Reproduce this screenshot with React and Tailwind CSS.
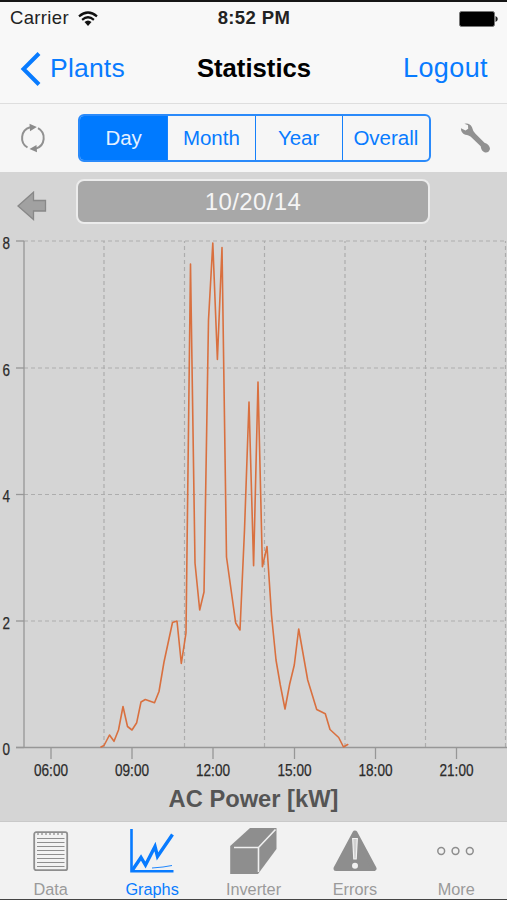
import React from "react";

const gridY = [241, 368, 494.5, 621];
const gridX = [104, 184.5, 264.5, 345, 425.5, 505.5];
const yTicks = [[8, 241], [6, 368], [4, 494.5], [2, 621], [0, 747.5]];
const xTicks = [["06:00", 51], ["09:00", 132], ["12:00", 213], ["15:00", 294.5], ["18:00", 375.5], ["21:00", 456.5]];
const power =
  "101,747 104,745.5 109.5,735 114,741.3 118.5,730 123,706.5 127.5,726.5 132,730 136.7,722.7 141,702 145.3,699.5 154.5,702.8 159,691.5 164,662 172.5,622.5 177,621 181.3,663.5 186,633 190.5,264 195,563 199.7,610 204,592 208.5,320 212.8,243 217.4,359.5 222,247.5 226.5,557 235.7,623 240,630 244.5,530 249,402 253.6,565.7 258,382 262.4,566.7 267,546.5 271.5,615 276,660 280.3,685 285,709 289.7,684 294.3,665 298.7,629 307.7,680 316.7,709.5 325.3,713.7 330,729.5 338.7,737.5 343.5,747 347.7,744.5";

function Chart() {
  return (
    <svg className="block h-[553px] w-full" viewBox="0 232 507 553" fontFamily="'Liberation Sans', Arial, sans-serif">
      <g stroke="#adadad" strokeWidth="1.2" strokeDasharray="4 3">
        {gridY.map((y) => <line key={y} x1="24" x2="507" y1={y} y2={y} />)}
        {gridX.map((x) => <line key={x} x1={x} x2={x} y1="747" y2="241" />)}
      </g>
      <g stroke="#979797" strokeWidth="1.3">
        <line x1="24" x2="24" y1="241" y2="747.5" />
        <line x1="16" x2="507" y1="747.5" y2="747.5" />
        {yTicks.map(([v, y]) => <line key={v} x1="16" x2="24" y1={y} y2={y} />)}
        {xTicks.map(([v, x]) => <line key={v} x1={x} x2={x} y1="747.5" y2="759" />)}
      </g>
      <g fill="#2b2b2b" stroke="#2b2b2b" strokeWidth="0.25" fontSize="17">
        {yTicks.map(([v, y]) => (
          <text key={v} x="2.5" y={y + 7.5} textLength="7.5" lengthAdjust="spacingAndGlyphs">{v}</text>
        ))}
        {xTicks.map(([v, x]) => (
          <text key={v} x={x - 17} y="776.3" textLength="34" lengthAdjust="spacingAndGlyphs">{v}</text>
        ))}
      </g>
      <polyline points={power} fill="none" stroke="#d9703f" strokeWidth="1.6" strokeLinejoin="round" strokeLinecap="round" />
    </svg>
  );
}

const DataIcon = (
  <svg width="36" height="42" viewBox="0 0 36 42" fill="none" stroke="#8e8e8e">
    <rect x="1.2" y="2.2" width="33" height="38" rx="2" strokeWidth="1.8" />
    <path d="M4 8.5H31.5M4 12.5H31.5M4 16.5H31.5M4 20.5H31.5M4 24.5H31.5M4 28.5H31.5M4 32.5H31.5M4 36.5H31.5" strokeWidth="1.1" />
    <path d="M5 2v3M9 2v3M13 2v3M17 2v3M21 2v3M25 2v3M29 2v3" strokeWidth="1.3" />
  </svg>
);
const GraphIcon = (
  <svg width="46" height="46" viewBox="0 0 46 46" fill="none" stroke="#087bff">
    <path d="M2.5 1V43.2H44.5" strokeWidth="2.6" />
    <path d="M3.5 42L12 29.5L16.5 37L26 18.5L28.5 28.5L43.5 6.5" strokeWidth="3.4" />
    <path d="M23 40L34 39L43 37.5" strokeWidth="0.9" />
  </svg>
);
const InverterIcon = (
  <svg width="48" height="48" viewBox="0 0 48 48" fill="#8e8e8e">
    <path d="M1.2 19L21 1H47.5V22L29 47H1.2Z" />
    <path d="M5 20.5H29.5L46.5 2.5M29.5 20.5V45" fill="none" stroke="#f0f0f0" strokeWidth="1.6" />
  </svg>
);
const ErrorIcon = (
  <svg width="46" height="44" viewBox="0 0 46 44">
    <path d="M23 4L42 39.5H4Z" fill="#8e8e8e" stroke="#8e8e8e" strokeWidth="5" strokeLinejoin="round" />
    <path d="M20.7 9.5H25.3L24.2 30H21.8Z" fill="#d0d0d0" stroke="#f2f2f2" strokeWidth="1.2" />
    <circle cx="23" cy="36.7" r="3" fill="#f2f2f2" />
  </svg>
);
const MoreIcon = (
  <svg width="38" height="10" viewBox="0 0 38 10" fill="none" stroke="#8e8e8e" strokeWidth="1.5">
    <circle cx="4.2" cy="5" r="3.4" /><circle cx="18.5" cy="5" r="3.4" /><circle cx="32.8" cy="5" r="3.4" />
  </svg>
);
const tabs = [["Data", DataIcon], ["Graphs", GraphIcon], ["Inverter", InverterIcon], ["Errors", ErrorIcon], ["More", MoreIcon]];

export default function App() {
  return (
    <div className="flex h-[900px] w-[507px] flex-col overflow-hidden border-t-2 border-[#161616] bg-[#d5d5d5] font-['Liberation_Sans',Arial,sans-serif]">
      <header className="flex h-[102px] shrink-0 flex-col border-b border-[#dedede] bg-[#f8f8f8]">
        <div className="grid h-[33px] grid-cols-3 items-center pr-[9px] pl-[10px] text-[18.5px] leading-none text-[#222]">
          <div className="flex items-center gap-[9px]">
            <span className="tracking-[0.35px]">Carrier</span>
            <svg width="20" height="16" viewBox="0 0 20 16" fill="none" stroke="#111" strokeWidth="2.2">
              <path d="M1 5.3Q10-2.3 19 5.3M4.1 8.8Q10 3.7 15.9 8.8" />
              <path d="M6.5 11Q10 8 13.5 11L10 15Z" fill="#111" stroke="none" />
            </svg>
          </div>
          <span className="text-center text-[18.5px] font-bold tracking-[0.4px] whitespace-nowrap">8:52 PM</span>
          <svg className="justify-self-end" width="39" height="16" viewBox="0 0 39 16">
            <rect x="0.5" y="0.5" width="35" height="15" rx="2" fill="#000" stroke="#777" />
            <path d="M36.5 5Q38.8 6 38.8 8T36.5 11Z" fill="#222" />
          </svg>
        </div>
        <div className="grid h-[67px] grid-cols-3 items-center pr-[19px] pl-5 text-[26.5px] leading-none text-[#087bff]">
          <div className="flex items-center gap-[9px]">
            <svg width="21" height="34" viewBox="0 0 21 34" fill="none" stroke="#087bff" strokeWidth="4">
              <path d="M19 1.5L3.5 17L19 32.5" />
            </svg>
            <span className="tracking-[0.2px]">Plants</span>
          </div>
          <h1 className="text-center text-[25.7px] font-bold text-black">Statistics</h1>
          <span className="text-right text-[27px] tracking-[0.4px]">Logout</span>
        </div>
      </header>

      <div className="flex h-[68px] shrink-0 items-center bg-[#f6f6f6] pl-5">
        <svg className="mr-[32px]" width="26" height="30" viewBox="0 0 26 30" fill="none" stroke="#919191" strokeWidth="2">
          <path d="M7.5 24.5A11.2 11.2 0 0 1 10 4.2M18 5.2A11.2 11.2 0 0 1 16 25.6" />
          <path d="M9.5 .8L16.8 4L10 8.2ZM16.5 22L9.5 26L17 29.2Z" fill="#8b8b8b" stroke="none" />
        </svg>
        <div className="grid h-[48px] w-[353px] grid-cols-4 overflow-hidden rounded-[6px] border-2 border-[#2a8afa] text-center text-[20.5px] leading-[44px] text-[#087bff]">
          <span className="bg-[#007aff] text-[#e5f1ff]">Day</span>
          <span className="border-l border-[#1580fa]">Month</span>
          <span className="border-l border-[#1580fa]">Year</span>
          <span className="border-l border-[#1580fa]">Overall</span>
        </div>
        <svg className="ml-[29px]" width="31" height="31" viewBox="0 0 31 31">
          <path d="M1 5.2L5.5 7.5L8.2 5.8L8 2.2L4.4.8Q9.5-.4 12 4.2Q12.8 8 15.5 10.8L24.5 19.8Q29.8 21.5 30 26Q28.7 30.2 25 29.5Q21 28 20.7 23.3L10.5 13.5Q7.5 11.5 5.2 11.7Q.5 9.8 1 5.2Z" fill="#919191" />
        </svg>
      </div>

      <main className="flex h-[649px] shrink-0 flex-col">
        <div className="flex h-[60px] items-start pt-[7px] pl-[17px]">
          <svg className="mt-[12px] mr-[29px]" width="30" height="30" viewBox="0 0 30 30">
            <path d="M1 15L16.5 1.2V9.5H28.5V20H16.5V28.5Z" fill="#a1a1a1" stroke="#888" strokeWidth="1.3" />
          </svg>
          <div className="h-[45px] w-[354px] rounded-[8px] border-2 border-[#ececec] bg-[#a8a8a8] text-center text-[24px] leading-[41px] tracking-[0.4px] text-[#f5f5f5]">10/20/14</div>
        </div>
        <Chart />
        <h2 className="text-center text-[23.7px] leading-[28px] font-bold text-[#555]">AC Power [kW]</h2>
      </main>

      <nav className="grid h-[79px] shrink-0 grid-cols-5 border-t border-b border-t-[#c9c9c9] border-b-[#444] bg-[#f2f2f2]">
        {tabs.map(([label, icon]) => (
          <div key={label} className={`flex flex-col items-center text-[16.3px] leading-[18px] ${label === "Graphs" ? "text-[#087bff]" : "text-[#9a9a9a]"}`}>
            <div className="flex h-[58px] items-center justify-center">{icon}</div>
            <span>{label}</span>
          </div>
        ))}
      </nav>
    </div>
  );
}
